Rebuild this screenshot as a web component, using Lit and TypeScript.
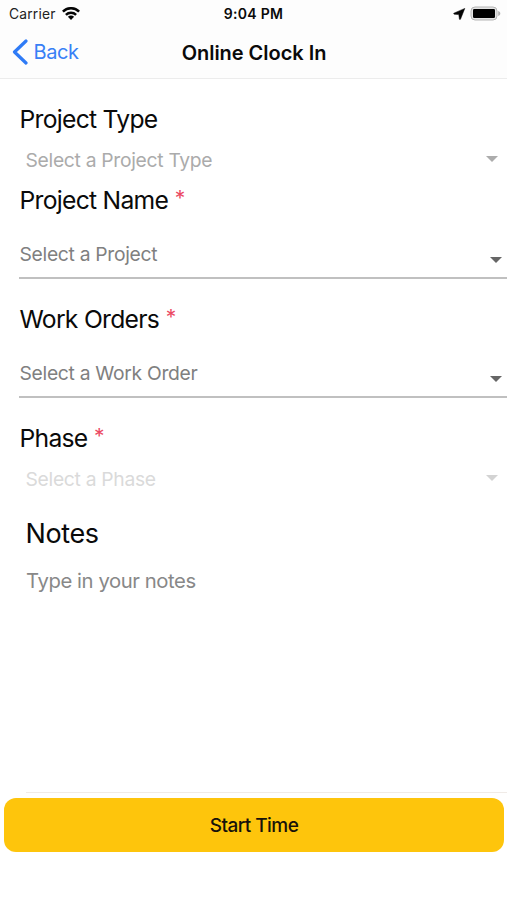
import { LitElement, html, css } from "lit";
import { customElement, property } from "lit/decorators.js";

@customElement("select-field")
class SelectField extends LitElement {
  @property() label = "";
  @property() placeholder = "";
  @property() variant = "line";
  @property({ type: Boolean }) required = false;

  static styles = css`
    :host { display: block; }
    .label {
      display: flex;
      height: 40px;
      line-height: 40px;
      padding-left: 19.5px;
      font-size: 24.7px;
      letter-spacing: -0.73px;
      color: #0a0a0a;
      white-space: nowrap;
    }
    .star { color: #eb4a63; margin: -1px 0 0 6.5px; font-size: 21px; }
    .row { display: flex; align-items: center; justify-content: space-between; white-space: nowrap; font-size: 19.3px; letter-spacing: -0.3px; }
    .line { margin-left: 19px; padding: 0 5px 0 0.5px; height: 57px; border-bottom: 2px solid #c0c0c0; color: #808080; }
    .line .value { padding-top: 10px; }
    .line .arrow { margin-top: 22px; color: #666; }
    .plain, .faint { height: 41px; padding: 0 9px 0 25.5px; color: #ababab; }
    .faint { color: #dadada; }
    .plain .arrow, .faint .arrow { margin-top: -1px; }
    .plain .arrow { color: #acacac; }
    .faint .arrow { color: #d3d3d3; }
    .arrow { display: block; fill: currentColor; }
  `;

  render() {
    return html`
      <div class="label"><span>${this.label}</span>${this.required ? html`<span class="star">*</span>` : ""}</div>
      <div class="row ${this.variant}">
        <span class="value">${this.placeholder}</span>
        <svg class="arrow" width="12" height="6" viewBox="0 0 12 6"><path d="M0 0H12L6 6Z" /></svg>
      </div>
    `;
  }
}

@customElement("app-root")
class AppRoot extends LitElement {
  static styles = css`
    :host {
      display: flex;
      flex-direction: column;
      height: 900px;
      overflow: hidden;
      background: #fff;
      font-family: Inter, "Liberation Sans", sans-serif;
      color: #0a0a0a;
    }
    .status, .nav { display: grid; grid-template-columns: 1fr auto 1fr; align-items: center; background: #fdfdfd; white-space: nowrap; }
    .status { height: 27px; padding: 0 6px 0 9px; font-size: 13.8px; }
    .side { display: flex; align-items: center; }
    .end { justify-content: flex-end; gap: 4px; }
    .carrier { letter-spacing: 0.2px; color: #222; margin-right: 6px; }
    .time { font-weight: 600; font-size: 14px; letter-spacing: 0.28px; margin: 0 1px 0 -2px; }
    .nav { height: 51px; padding: 0 11px 0 12px; border-bottom: 1px solid #ececec; }
    .back { color: #3880f6; font-size: 20px; gap: 5.5px; letter-spacing: -0.4px; }
    .back svg { margin-top: -2px; }
    .back span { margin-top: -1px; }
    .title { font-weight: 600; font-size: 20px; letter-spacing: -0.03px; }
    .form { flex: 1; display: flex; flex-direction: column; padding-top: 20px; }
    .gap { margin-top: 20px; }
    .notes { flex: 1; margin-left: 26px; padding-top: 11px; border-bottom: 1px solid #f0ebe7; }
    .heading { font-size: 27px; line-height: 48px; letter-spacing: -0.4px; margin-left: -0.5px; }
    .hint { font-size: 20.3px; line-height: 46px; letter-spacing: -0.42px; color: #888; }
    .action {
      height: 54px;
      margin: 5px 3px 48px 4px;
      padding: 1px 0 0;
      border: 0;
      border-radius: 12px;
      background: #fec50c;
      color: #17120a;
      font: 500 19px Inter, "Liberation Sans", sans-serif;
      letter-spacing: -0.55px;
    }
    svg { display: block; }
  `;

  render() {
    return html`
      <div class="status">
        <div class="side">
          <span class="carrier">Carrier</span>
          <svg width="18" height="14" viewBox="0 0 18 14">
            <g fill="none" stroke="#050505" stroke-width="2.5">
              <path d="M0.9 4.6C5.4 .1 12.6 .1 17.1 4.6" />
              <path d="M3.9 7.8C6.8 5 11.2 5 14.1 7.8" />
            </g>
            <path d="M5.9 9.8C7.7 8.2 10.3 8.2 12.1 9.8L9 13Z" fill="#050505" />
          </svg>
        </div>
        <span class="time">9:04 PM</span>
        <div class="side end">
          <svg width="13" height="12" viewBox="0 0 13 12"><path d="M11.8 .4L0.8 5.2Q.5 6 1.2 6.2L5.8 6.6L6.4 11.2Q7 12 7.5 11.2Z" fill="#050505" stroke="#050505" stroke-width="0.5" stroke-linejoin="round" /></svg>
          <svg width="31" height="15" viewBox="0 0 31 15">
            <rect x="1" y="1" width="26" height="13" rx="4" fill="#e4e4e4" stroke="#b5b5b5" />
            <rect x="3" y="3" width="22" height="9" rx="1.2" fill="#000" />
            <path d="M28.2 5C31 6 31 9 28.2 10Z" fill="#b0b0b0" />
          </svg>
        </div>
      </div>
      <div class="nav">
        <div class="side back">
          <svg width="16" height="26" viewBox="0 0 16 26"><path d="M14 2L2.5 13L14 24" fill="none" stroke="#2f7bf6" stroke-width="3.2" stroke-linecap="round" stroke-linejoin="round" /></svg>
          <span>Back</span>
        </div>
        <span class="title">Online Clock In</span>
        <span></span>
      </div>
      <div class="form">
        <select-field label="Project Type" placeholder="Select a Project Type" variant="plain"></select-field>
        <select-field label="Project Name" placeholder="Select a Project" required></select-field>
        <select-field class="gap" label="Work Orders" placeholder="Select a Work Order" required></select-field>
        <select-field class="gap" label="Phase" placeholder="Select a Phase" variant="faint" required></select-field>
        <div class="notes">
          <div class="heading">Notes</div>
          <div class="hint">Type in your notes</div>
        </div>
      </div>
      <button class="action">Start Time</button>
    `;
  }
}
